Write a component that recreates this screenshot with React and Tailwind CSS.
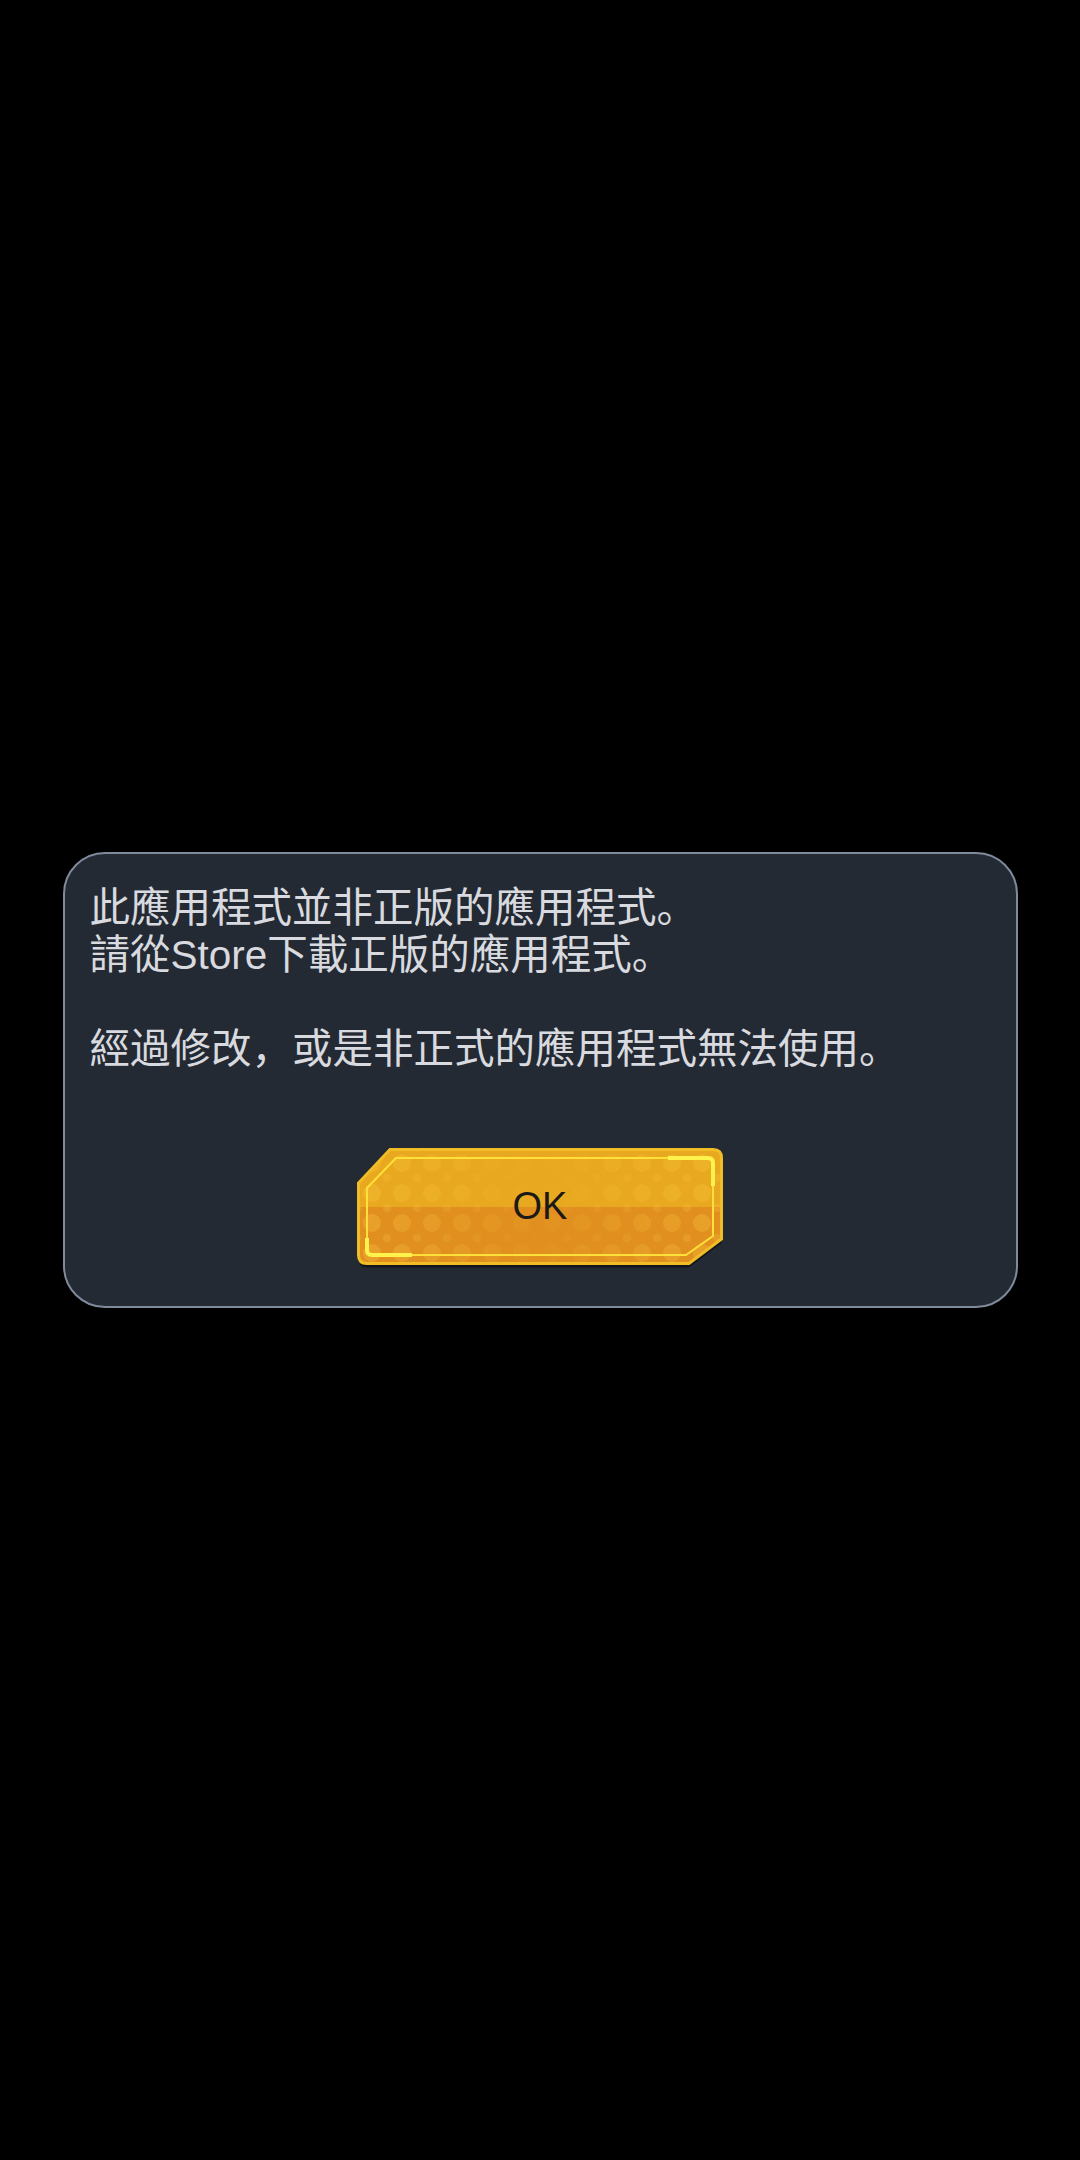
export default function App() {
  const outer = "M33,1.5 H356 Q364.5,1.5 364.5,10 V91 L332,115.5 H10 Q1.5,115.5 1.5,107 V35 Z";
  const inner = "M39,10 H351 Q356,10 356,15 V88 L329,107 H15 Q10,107 10,102 V40 Z";
  return (
    <div className="min-h-[2160px] w-full bg-black flex items-center justify-center">
      <div className="w-[955px] h-[456px] rounded-[42px] border-2 border-[#7f8a9b] bg-[#242a34] pt-[31px] px-[25px] flex flex-col font-['Liberation_Sans','Noto_Sans_CJK_SC',sans-serif]">
        <div className="text-[40.5px] leading-[47px] text-[#d8dadf]">
          <p>此應用程式並非正版的應用程式。</p>
          <p>請從Store下載正版的應用程式。</p>
          <p>&nbsp;</p>
          <p>經過修改，或是非正式的應用程式無法使用。</p>
        </div>
        <div className="mt-[75px] flex justify-center">
          <div className="relative w-[366px] h-[117px]">
            <svg className="absolute left-0 top-0" width="366" height="122" viewBox="0 0 366 122">
              <defs>
                <pattern id="dots" width="30" height="30" patternUnits="userSpaceOnUse">
                  <circle cx="15" cy="15" r="9" fill="#ffcf48" opacity="0.28" />
                  <circle cx="0" cy="0" r="4" fill="#ffcf48" opacity="0.22" />
                  <circle cx="30" cy="0" r="4" fill="#ffcf48" opacity="0.22" />
                  <circle cx="0" cy="30" r="4" fill="#ffcf48" opacity="0.22" />
                  <circle cx="30" cy="30" r="4" fill="#ffcf48" opacity="0.22" />
                </pattern>
                <linearGradient id="fade" x1="0" x2="1" y1="0" y2="0">
                  <stop offset="0" stopColor="#fff" stopOpacity="1" />
                  <stop offset="0.3" stopColor="#fff" stopOpacity="0.5" />
                  <stop offset="0.5" stopColor="#fff" stopOpacity="0.1" />
                  <stop offset="0.7" stopColor="#fff" stopOpacity="0.5" />
                  <stop offset="1" stopColor="#fff" stopOpacity="1" />
                </linearGradient>
                <mask id="m">
                  <rect x="0" y="0" width="366" height="117" fill="url(#fade)" />
                </mask>
                <clipPath id="c">
                  <path d={outer} />
                </clipPath>
              </defs>
              <path d={outer} transform="translate(0,4)" fill="#000" opacity="0.5" />
              <g clipPath="url(#c)">
                <rect x="0" y="0" width="366" height="59" fill="#e8a81f" />
                <rect x="0" y="59" width="366" height="60" fill="#e1901f" />
                <rect x="0" y="0" width="366" height="117" fill="url(#dots)" mask="url(#m)" />
              </g>
              <path d={outer} fill="none" stroke="#f0bd26" strokeWidth="3" />
              <path d={inner} fill="none" stroke="#ffe03a" strokeWidth="2" />
              <path d="M311,10 H351 Q356,10 356,15 V38" fill="none" stroke="#fff24a" strokeWidth="4" />
              <path d="M10,90 V102 Q10,107 15,107 H55" fill="none" stroke="#fff24a" strokeWidth="4" />
            </svg>
            <span className="absolute inset-0 flex items-center justify-center text-[38px] text-[#1c1a17] font-['Liberation_Sans',sans-serif]">OK</span>
          </div>
        </div>
      </div>
    </div>
  );
}
